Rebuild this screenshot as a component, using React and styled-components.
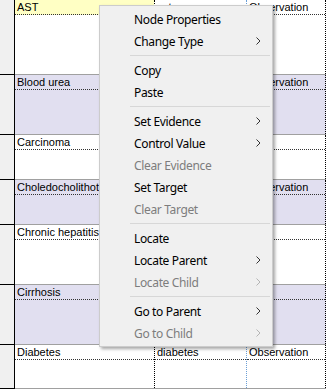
import React from 'react'
import styled, { createGlobalStyle } from 'styled-components'

const nodes = [
    { name: 'AST', id: 'ast', kind: 'Observation', h: 75, selected: true },
    { name: 'Blood urea', id: 'blood_urea', kind: 'Observation', h: 60, alt: true },
    { name: 'Carcinoma', id: 'carcinoma', kind: '', h: 45 },
    { name: 'Choledocholithotomy', id: 'choledocholithotomy', kind: 'Observation', h: 45, alt: true },
    { name: 'Chronic hepatitis', id: 'chronic_hepatitis', kind: '', h: 60 },
    { name: 'Cirrhosis', id: 'cirrhosis', kind: '', h: 60, alt: true },
    { name: 'Diabetes', id: 'diabetes', kind: 'Observation', h: 44 },
]

const menu = [
    { label: 'Node Properties' },
    { label: 'Change Type', sub: true },
    'sep',
    { label: 'Copy' },
    { label: 'Paste' },
    'sep',
    { label: 'Set Evidence', sub: true },
    { label: 'Control Value', sub: true },
    { label: 'Clear Evidence', off: true },
    { label: 'Set Target' },
    { label: 'Clear Target', off: true },
    'sep',
    { label: 'Locate' },
    { label: 'Locate Parent', sub: true },
    { label: 'Locate Child', sub: true, off: true },
    'sep',
    { label: 'Go to Parent', sub: true },
    { label: 'Go to Child', sub: true, off: true },
]

function Chevron({ off }) {
    return (
        <svg width="5" height="8" viewBox="0 0 5 8">
            <polyline points="0.5,0.5 4,4 0.5,7.5" fill="none"
                stroke={off ? '#b4b4b4' : '#333'} strokeWidth="1" />
        </svg>
    )
}

function App() {
    return (
        <>
            <GlobalStyle />
            <Page>
                {nodes.map((n) => (
                    <Row key={n.name} $h={n.h}>
                        <Gutter />
                        <Cells $alt={n.alt}>
                            <Col $w={139} $line="#000">
                                <Head $selected={n.selected}>{n.name}</Head>
                            </Col>
                            <Col $w={91} $line="#6a9fd6">
                                <Head>{n.id}</Head>
                            </Col>
                            <Col $w={78} $line="#000">
                                <Head>{n.kind}</Head>
                            </Col>
                        </Cells>
                    </Row>
                ))}
                <Menu>
                    {menu.map((m, i) =>
                        m === 'sep' ? (
                            <Separator key={i} />
                        ) : (
                            <Item key={m.label} $off={m.off}>
                                <span>{m.label}</span>
                                {m.sub && <Chevron off={m.off} />}
                            </Item>
                        )
                    )}
                </Menu>
            </Page>
        </>
    )
}

export default App

const GlobalStyle = createGlobalStyle`
    body {
        margin: 0;
        background: #fff;
        overflow: hidden;
    }
`
const Page = styled.div`
    position: relative;
    width: 326px;
    height: 390px;
    display: flex;
    flex-direction: column;
    font-family: "Liberation Sans", Arial, sans-serif;
    font-size: 11px;
    color: #000;
`
const Row = styled.div`
    display: flex;
    height: ${(p) => p.$h}px;
    flex-shrink: 0;
`
const Gutter = styled.div`
    width: 16px;
    background: #f0f0f0;
    border-right: 1px solid #000;
    border-bottom: 1px solid #000;
`
const Cells = styled.div`
    display: flex;
    background: ${(p) => (p.$alt ? '#e1dff0' : '#fff')};
    border-bottom: 1px solid #a0a0a0;
`
const Col = styled.div`
    width: ${(p) => p.$w}px;
    border-right: 1px dotted ${(p) => p.$line};
    display: flex;
    flex-direction: column;
    overflow: hidden;
`
const Head = styled.div`
    height: 14px;
    line-height: 14px;
    padding-left: 2px;
    white-space: nowrap;
    overflow: hidden;
    border-bottom: 1px dotted #333;
    background: ${(p) => (p.$selected ? '#ffffc4' : 'transparent')};
`
const Menu = styled.div`
    position: absolute;
    left: 99px;
    top: 5px;
    width: 168px;
    padding: 2px;
    background: #f0f0f0;
    border: 1px solid #cccccc;
    box-shadow: 2px 2px 3px rgba(0, 0, 0, 0.35);
    font-family: "Noto Sans", "Open Sans", sans-serif;
    font-size: 12px;
    letter-spacing: -0.35px;
`
const Item = styled.div`
    height: 22px;
    display: flex;
    align-items: center;
    justify-content: space-between;
    padding: 0 9px 0 32px;
    color: ${(p) => (p.$off ? '#7d7d7d' : '#000')};
`
const Separator = styled.div`
    height: 1px;
    margin: 3px 0 3px 28px;
    background: #d7d7d7;
`
